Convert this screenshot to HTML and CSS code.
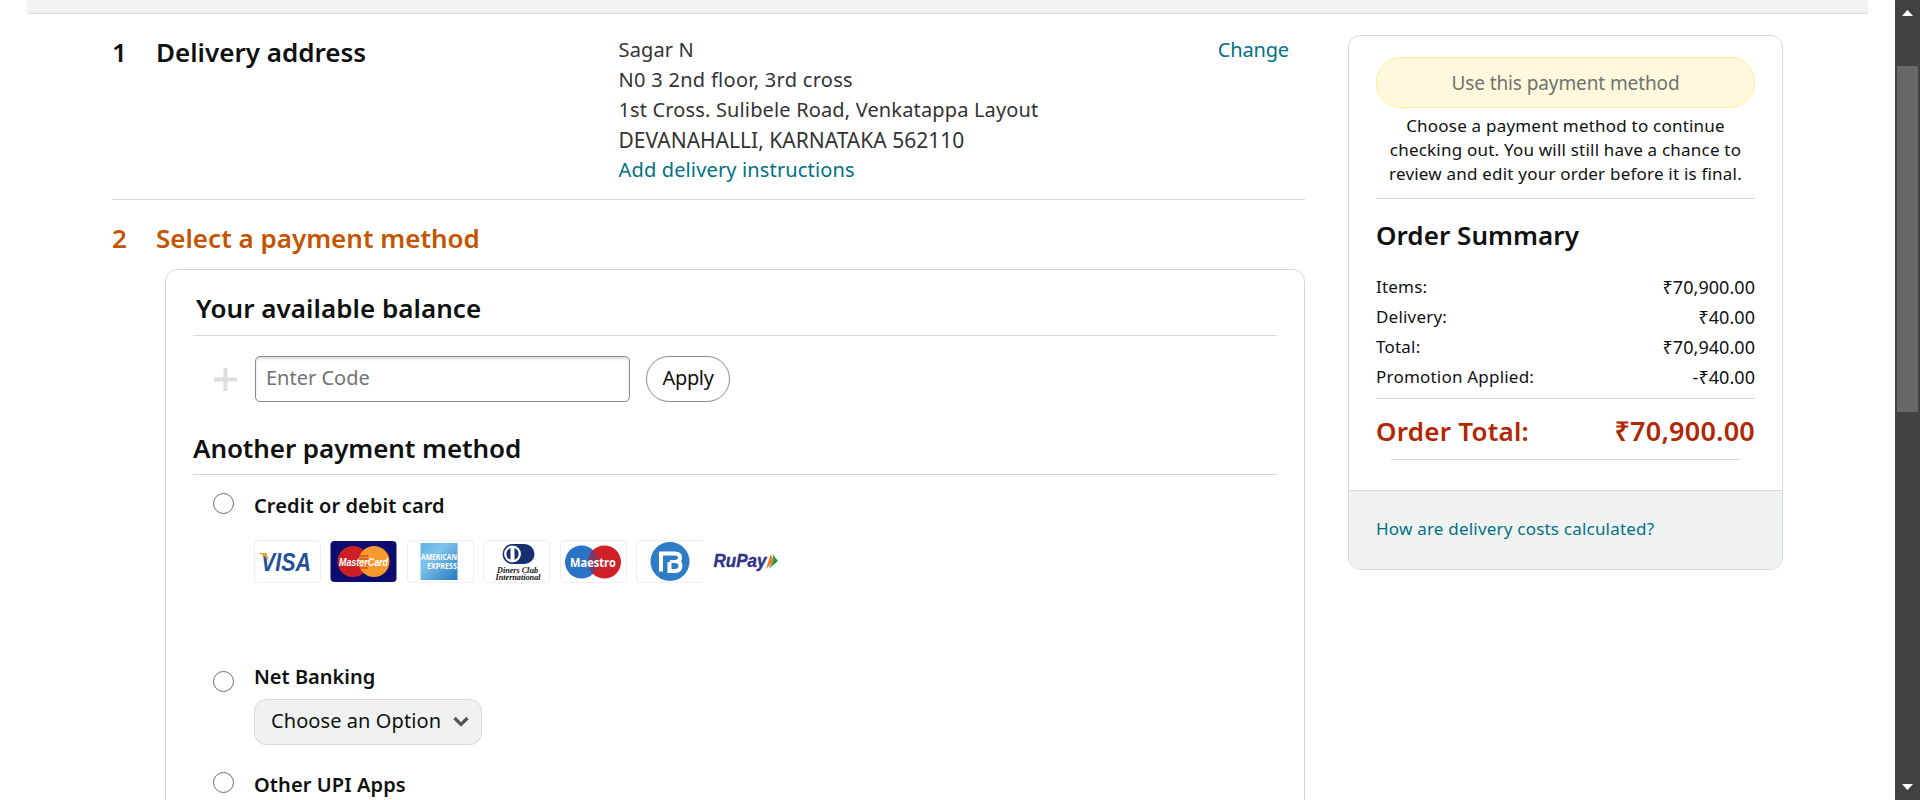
FILE: index.html
```html
<!DOCTYPE html>
<html lang="en">
<head>
<meta charset="utf-8">
<title>Checkout</title>
<link rel="stylesheet" href="styles.css">
</head>
<body>
<div class="window">
  <div class="view">
    <div class="topbar"></div>
    <div class="columns">
      <main class="steps">
        <section class="address">
          <h2 class="heading">1</h2>
          <h2 class="heading heading-tight">Delivery address</h2>
          <div class="address-lines">
            <div>Sagar N</div>
            <div class="line-floor">N0 3 2nd floor, 3rd cross</div>
            <div>1st Cross. Sulibele Road, Venkatappa Layout</div>
            <div class="line-city">DEVANAHALLI, KARNATAKA 562110</div>
            <a class="link">Add delivery instructions</a>
          </div>
          <a class="link change">Change</a>
        </section>
        <section class="payment">
          <div class="payment-title">
            <h2 class="heading">2</h2>
            <h2 class="heading heading-tight">Select a payment method</h2>
          </div>
          <div class="panel">
            <h3 class="heading balance-title">Your available balance</h3>
            <div class="code-row">
              <svg class="plus" width="23" height="23" viewBox="0 0 23 23"><path d="M0 11.5H23M11.5 0V23" stroke="#ddd" stroke-width="4" fill="none"/></svg>
              <div class="code-input">Enter Code</div>
              <button class="apply">Apply</button>
            </div>
            <h3 class="heading another-title">Another payment method</h3>
            <div class="option option-card">
              <span class="radio"></span>
              <div>
                <div class="label">Credit or debit card</div>
                <div class="cards">
                  <svg width="67" height="43" viewBox="0 0 67 43"><rect class="card" x=".5" y=".5" width="66" height="42" rx="4"/><text class="visa" x="7" y="31" textLength="50" lengthAdjust="spacingAndGlyphs">VISA</text><path d="M4 13h8.500l2.500 8.500C12.500 17.500 9 14.500 4 13z" fill="#e2ab3c"/></svg>
                  <svg width="67" height="43" viewBox="0 0 67 43"><rect x="0.500" y="1" width="66" height="41" rx="4" fill="#0b0b70"/><circle cx="23" cy="21.500" r="15.500" fill="#cc2027"/><circle cx="44" cy="21.500" r="15.500" fill="#f59a2e"/><path d="M29 16h9M28.500 19h10M28.500 25h10M29 28h9" stroke="#cc2027" stroke-width="1.200"/><text class="mc" x="9" y="25.500" textLength="49" lengthAdjust="spacingAndGlyphs">MasterCard</text></svg>
                  <svg width="67" height="43" viewBox="0 0 67 43"><defs><linearGradient id="amex" x1="0" y1="0" x2="1" y2="1"><stop offset="0" stop-color="#5fb2e2"/><stop offset=".35" stop-color="#7fc4ec"/><stop offset="1" stop-color="#2478bd"/></linearGradient></defs><rect class="card" x=".5" y=".5" width="66" height="42" rx="4"/><rect x="13.500" y="3" width="37" height="37" fill="url(#amex)"/><text class="brand amex" x="14" y="20" textLength="36" lengthAdjust="spacingAndGlyphs">AMERICAN</text><text class="brand amex" x="20" y="28.500" textLength="30" lengthAdjust="spacingAndGlyphs">EXPRESS</text></svg>
                  <svg width="67" height="43" viewBox="0 0 67 43"><rect class="card" x=".5" y=".5" width="66" height="42" rx="4"/><rect x="19.500" y="4" width="32" height="20" rx="10" fill="#16306f"/><circle cx="29.500" cy="14" r="9" fill="#fff" stroke="#16306f" stroke-width="1.200"/><path d="M27.500 8.300a6 6 0 0 0 0 11.400zM31.500 8.300a6 6 0 0 1 0 11.400z" fill="#16306f"/><text class="diners" x="14" y="32.500" textLength="41" lengthAdjust="spacingAndGlyphs">Diners Club</text><text class="diners" x="12.500" y="40" textLength="45" lengthAdjust="spacingAndGlyphs">International</text></svg>
                  <svg width="67" height="43" viewBox="0 0 67 43"><rect class="card" x=".5" y=".5" width="66" height="42" rx="4"/><circle cx="21.500" cy="22" r="16.500" fill="#2b73c7"/><circle cx="44.500" cy="22" r="16.500" fill="#cf2127"/><path d="M33 10.200a16.500 16.500 0 0 1 0 23.600a16.500 16.500 0 0 1 0-23.600z" fill="#7d3867"/><text class="brand maestro" x="10" y="26.500" textLength="46" lengthAdjust="spacingAndGlyphs">Maestro</text></svg>
                  <svg width="67" height="43" viewBox="0 0 67 43"><path d="M66 .5H4.500a4 4 0 0 0-4 4v34a4 4 0 0 0 4 4H66" fill="#fff" stroke="#eee"/><circle cx="34" cy="21.500" r="19.500" fill="#2e7cc6"/><path d="M25 31.500V13.500H39q5 0 5 4.200 0 3-2.500 3.800 3 .8 3 4.300 0 5.200-5.500 5.200h-5.500V22" fill="none" stroke="#fff" stroke-width="4"/><path d="M34 21.500h7" stroke="#fff" stroke-width="3"/></svg>
                  <svg width="67" height="43" viewBox="0 0 67 43"><text class="rupay" x="1.500" y="26.500" textLength="53" lengthAdjust="spacingAndGlyphs">RuPay</text><path d="M58.500 14.500l4 6.500-8.500 8z" fill="#f47b29"/><path d="M60.500 14l5.500 7-9.500 8 5-8z" fill="#1b9a50"/></svg>
                </div>
              </div>
            </div>
            <div class="option option-bank">
              <span class="radio"></span>
              <div>
                <div class="label label-tight">Net Banking</div>
                <div class="select"><span>Choose an Option</span><svg width="16" height="11" viewBox="0 0 16 11"><path d="M1.500 2L8 8.500 14.500 2" fill="none" stroke="#555" stroke-width="3.300"/></svg></div>
              </div>
            </div>
            <div class="option option-upi">
              <span class="radio"></span>
              <div class="label">Other UPI Apps</div>
            </div>
          </div>
        </section>
      </main>
      <aside class="summary">
        <div class="summary-body">
          <button class="use-method">Use this payment method</button>
          <p class="hint">Choose a payment method to continue<br>checking out. You will still have a chance to<br>review and edit your order before it is final.</p>
          <h2 class="heading summary-title">Order Summary</h2>
          <div class="rows">
            <div class="row"><span>Items:</span><span class="amount">₹70,900.00</span></div>
            <div class="row"><span>Delivery:</span><span class="amount">₹40.00</span></div>
            <div class="row"><span>Total:</span><span class="amount">₹70,940.00</span></div>
            <div class="row"><span>Promotion Applied:</span><span class="amount">-₹40.00</span></div>
          </div>
          <div class="heading total"><span>Order Total:</span><span class="total-amount">₹70,900.00</span></div>
          <div class="short-rule"></div>
        </div>
        <div class="summary-footer"><a class="link">How are delivery costs calculated?</a></div>
      </aside>
    </div>
  </div>
  <div class="scrollbar">
    <svg width="11" height="6" viewBox="0 0 11 6"><path d="M5.500 0L11 6H0z" fill="#fff"/></svg>
    <div class="thumb"></div>
    <svg class="down" width="11" height="6" viewBox="0 0 11 6"><path d="M0 0h11L5.500 6z" fill="#fff"/></svg>
  </div>
</div>
</body>
</html>
```
FILE: styles.css
```css
* { box-sizing: border-box; }
body { margin: 0; background: #fff; color: #0f1111; font: 20px/30px "Noto Sans", sans-serif; overflow: hidden; }
button { font: inherit; color: inherit; padding: 0; }
.window { display: flex; width: 1920px; height: 800px; overflow: hidden; }
.view { width: 1895px; height: 800px; overflow: hidden; }
.topbar { height: 14px; margin: 0 27px; background: linear-gradient(#f4f4f4, #f0f0f0); border-bottom: 1px solid #ddd; }
.columns { display: flex; align-items: flex-start; gap: 43px; padding-left: 112px; }
.steps { width: 1193px; }
.heading { margin: 0; font-size: 26px; line-height: 36px; font-weight: 650; letter-spacing: .05px; white-space: nowrap; }
.heading-tight { letter-spacing: 0; }
.link { color: #007185; }

.address { display: grid; grid-template-columns: 44px 462px 1fr auto; height: 186px; padding: 20px 16px 0 0; border-bottom: 1px solid #d5d9d9; }
.address-lines { padding: 1px 0 0 .5px; color: #333; letter-spacing: .15px; white-space: nowrap; }
.line-floor { letter-spacing: .29px; }
.line-city { font-size: 21px; letter-spacing: 0; }
.change { padding-top: 1px; letter-spacing: -.15px; }

.payment { padding-top: 20px; }
.payment-title { display: grid; grid-template-columns: 44px 1fr; color: #c45500; }
.panel { height: 600px; margin: 13px 0 0 53px; padding: 20px 27px 0; border: 1px solid #d5d9d9; border-radius: 12px; }
.balance-title { padding: 0 0 9px 3px; border-bottom: 1px solid #d5d9d9; }
.code-row { display: flex; align-items: center; height: 46px; margin-top: 20px; padding-left: 21px; }
.plus { margin: 1px 18px 0 0; }
.code-input { width: 375px; height: 46px; padding: 6px 10px; border: 1px solid #888c8c; border-radius: 5px; color: #6f7373; box-shadow: inset 0 2px 3px rgba(15, 17, 17, .15); }
.apply { width: 84px; height: 46px; margin-left: 16px; padding-bottom: 2px; border: 1px solid #888c8c; border-radius: 23px; background: #fff; letter-spacing: -.35px; }
.another-title { margin-top: 28px; padding-bottom: 8px; border-bottom: 1px solid #d5d9d9; letter-spacing: -.08px; }

.option { display: grid; grid-template-columns: 41px 1fr; padding-left: 20px; }
.radio { width: 21px; height: 21px; margin-top: 2px; border: 1.5px solid #6a6a6a; border-radius: 50%; }
.label { font-weight: 650; letter-spacing: .1px; }
.label-tight { letter-spacing: 0; }
.option-card { margin-top: 16px; }
.option-bank { margin-top: 79px; }
.option-bank .radio { margin-top: 9px; }
.option-upi { margin-top: 25px; }
.cards { display: flex; gap: 9.4px; height: 43px; margin-top: 19px; }
.card { fill: #fff; stroke: #eee; }
.visa { font: italic 700 25px "Liberation Sans", sans-serif; fill: #26509a; }
.brand { font-family: "Open Sans", sans-serif; font-weight: 700; fill: #fff; }
.mc { font: italic 700 11px "Liberation Sans", sans-serif; fill: #fff; }
.amex { font-size: 8.5px; }
.diners { font: italic 700 9px "Liberation Serif", serif; fill: #111; }
.maestro { font-size: 13px; }
.rupay { font: italic 700 18px "Liberation Sans", sans-serif; fill: #2f3584; stroke: #2f3584; stroke-width: .4px; }
.select { display: flex; align-items: center; justify-content: space-between; width: 228px; height: 46px; margin-top: 7px; padding: 0 12px 3px 16px; background: #f0f2f2; border: 1px solid #d5d9d9; border-radius: 12px; letter-spacing: .08px; }
.select svg { margin-top: 1px; }

.summary { width: 435px; margin-top: 21px; border: 1px solid #d5d9d9; border-radius: 12px; overflow: hidden; font-size: 17px; letter-spacing: .21px; }
.summary-body { height: 454px; padding: 21px 27px 0; }
.use-method { display: block; width: 379px; height: 51px; border: 1px solid #ffec94; border-radius: 25px; background: #fff8dc; color: #6f7373; font-size: 19px; letter-spacing: -.1px; }
.hint { margin: 6px 0 0; padding-bottom: 12px; border-bottom: 1px solid #d5d9d9; line-height: 24px; text-align: center; white-space: nowrap; }
.summary-title { margin-top: 18px; }
.rows { margin-top: 19px; padding-bottom: 6px; border-bottom: 1px solid #d5d9d9; }
.row { display: flex; justify-content: space-between; }
.amount { font-size: 18px; letter-spacing: .05px; }
.total { display: flex; justify-content: space-between; margin-top: 14px; color: #b12704; letter-spacing: .24px; }
.total-amount { font-size: 27px; letter-spacing: .2px; }
.short-rule { height: 1px; margin: 10px 15px 0; background: #d5d9d9; }
.summary-footer { height: 79px; padding: 23px 27px 0; background: #f0f2f2; border-top: 1px solid #d5d9d9; }

.scrollbar { display: flex; flex-direction: column; align-items: center; width: 25px; height: 800px; padding: 10px 0; background: #424242; }
.thumb { width: 21px; height: 346px; margin-top: 50px; background: #686868; }
.down { margin-top: auto; }
```
